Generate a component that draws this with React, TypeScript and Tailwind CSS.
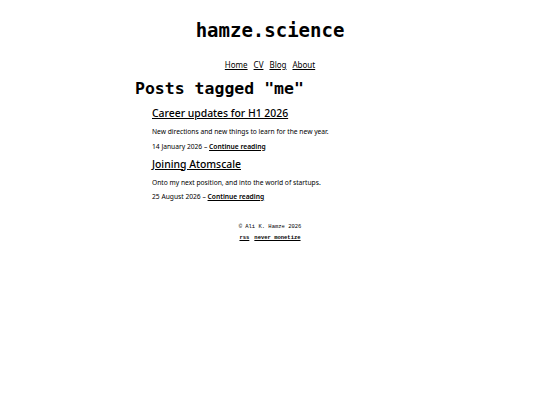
import React from "react";

const mono = { fontFamily: '"DejaVu Sans Mono", monospace' };

export default function App() {
  const posts = [
    { title: "Career updates for H1 2026", desc: "New directions and new things to learn for the new year.", date: "14 January 2026" },
    { title: "Joining Atomscale", desc: "Onto my next position, and into the world of startups.", date: "25 August 2026" },
  ];
  return (
    <div className="min-h-[405px] w-[540px] bg-white text-black" style={{ fontFamily: '"Noto Sans", sans-serif' }}>
      <div className="mx-auto w-[270px] pt-[17px]">
        <h1 className="text-center text-[19px] font-bold leading-[26px]" style={mono}>hamze.science</h1>
        <nav className="mt-[16px] flex justify-center gap-[6px] text-[8px] leading-[11px]">
          <a className="underline">Home</a>
          <a className="underline">CV</a>
          <a className="underline">Blog</a>
          <a className="underline">About</a>
        </nav>
        <h2 className="mt-[8px] text-[16.5px] font-bold leading-[22px]" style={mono}>Posts tagged "me"</h2>
        <div className="pl-[17px]">
          {posts.map((p, i) => (
            <div key={p.title} className={i === 0 ? "mt-[6px]" : "mt-[5px]"}>
              <h3 className="text-[10.4px] font-medium leading-[15px] underline">{p.title}</h3>
              <p className="mt-[6px] text-[6.7px] leading-[10px]">{p.desc}</p>
              <p className="mt-[4.5px] text-[6.7px] leading-[10px]">
                {p.date} – <a className="font-semibold underline">Continue reading</a>
              </p>
            </div>
          ))}
        </div>
        <footer className="mt-[21px] text-center text-[5.5px]" style={{ fontFamily: '"Liberation Mono", monospace' }}>
          <p>© Ali K. Hamze 2026</p>
          <p className="mt-[3px] flex justify-center gap-[5px] font-bold">
            <a className="underline">rss</a>
            <a className="underline">never monetize</a>
          </p>
        </footer>
      </div>
    </div>
  );
}
